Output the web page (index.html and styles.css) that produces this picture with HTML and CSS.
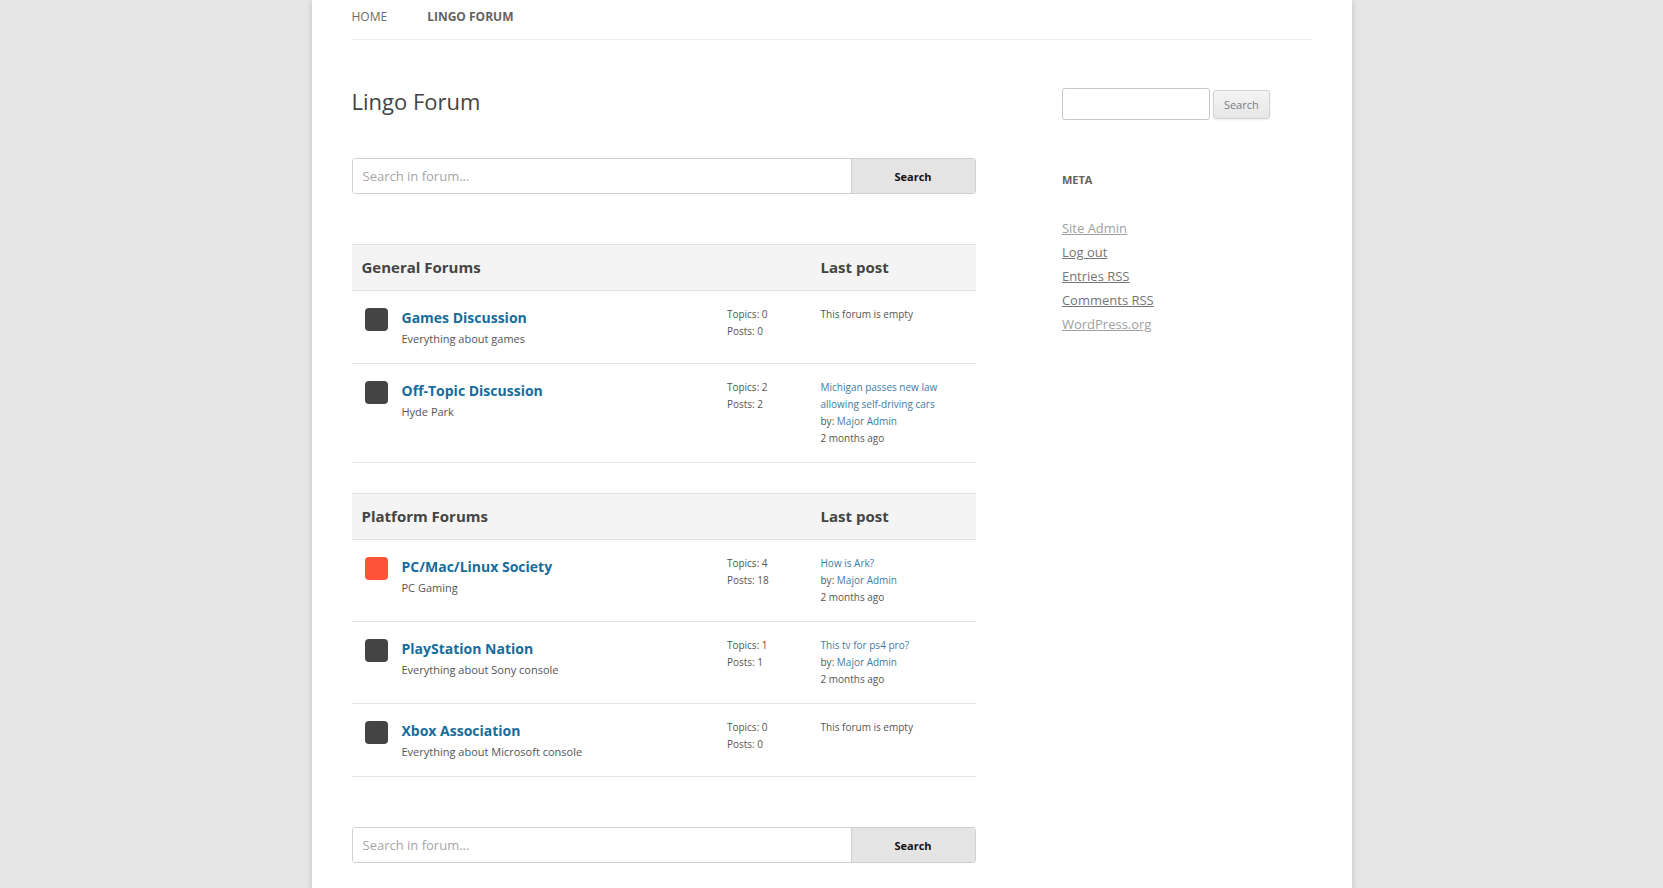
FILE: index.html
```html
<!DOCTYPE html>
<html lang="en">
<head>
<meta charset="utf-8">
<title>Lingo Forum</title>
<link rel="stylesheet" href="styles.css">
</head>
<body>
<div class="page">
  <nav class="main-nav">
    <a href="#">Home</a>
    <a href="#" class="current" aria-current="page">Lingo Forum</a>
  </nav>
  <div class="columns">
    <main class="content">
      <h1 class="title">Lingo Forum</h1>
      <form class="forum-search">
        <input type="text" placeholder="Search in forum..." aria-label="Search in forum">
        <button type="button">Search</button>
      </form>

      <table class="forums">
        <colgroup><col class="col-icon"><col><col class="col-counts"><col class="col-last"></colgroup>
        <thead>
          <tr><th colspan="3" class="group">General Forums</th><th>Last post</th></tr>
        </thead>
        <tbody>
          <tr>
            <td><span class="marker"></span></td>
            <td><a class="name" href="#">Games Discussion</a><p class="about">Everything about games</p></td>
            <td class="small">Topics: 0<br>Posts: 0</td>
            <td class="small">This forum is empty</td>
          </tr>
          <tr>
            <td><span class="marker"></span></td>
            <td><a class="name" href="#">Off-Topic Discussion</a><p class="about">Hyde Park</p></td>
            <td class="small">Topics: 2<br>Posts: 2</td>
            <td class="small"><a href="#">Michigan passes new law allowing self-driving cars</a><br>by: <a href="#">Major Admin</a><br>2 months ago</td>
          </tr>
        </tbody>
      </table>

      <table class="forums">
        <colgroup><col class="col-icon"><col><col class="col-counts"><col class="col-last"></colgroup>
        <thead>
          <tr><th colspan="3" class="group">Platform Forums</th><th>Last post</th></tr>
        </thead>
        <tbody>
          <tr>
            <td><span class="marker unread"></span></td>
            <td><a class="name" href="#">PC/Mac/Linux Society</a><p class="about">PC Gaming</p></td>
            <td class="small">Topics: 4<br>Posts: 18</td>
            <td class="small"><a href="#">How is Ark?</a><br>by: <a href="#">Major Admin</a><br>2 months ago</td>
          </tr>
          <tr>
            <td><span class="marker"></span></td>
            <td><a class="name" href="#">PlayStation Nation</a><p class="about">Everything about Sony console</p></td>
            <td class="small">Topics: 1<br>Posts: 1</td>
            <td class="small"><a href="#">This tv for ps4 pro?</a><br>by: <a href="#">Major Admin</a><br>2 months ago</td>
          </tr>
          <tr>
            <td><span class="marker"></span></td>
            <td><a class="name" href="#">Xbox Association</a><p class="about">Everything about Microsoft console</p></td>
            <td class="small">Topics: 0<br>Posts: 0</td>
            <td class="small">This forum is empty</td>
          </tr>
        </tbody>
      </table>

      <form class="forum-search">
        <input type="text" placeholder="Search in forum..." aria-label="Search in forum">
        <button type="button">Search</button>
      </form>
    </main>

    <aside class="sidebar">
      <form class="site-search">
        <input type="text" aria-label="Search site">
        <button type="button">Search</button>
      </form>
      <h2 class="widget-title">Meta</h2>
      <ul class="links">
        <li><a href="#" class="visited">Site Admin</a></li>
        <li><a href="#">Log out</a></li>
        <li><a href="#">Entries RSS</a></li>
        <li><a href="#">Comments RSS</a></li>
        <li><a href="#" class="visited">WordPress.org</a></li>
      </ul>
    </aside>
  </div>
</div>
</body>
</html>
```
FILE: styles.css
```css
* {
  box-sizing: border-box;
}

body {
  margin: 0;
  background: #e6e6e6;
  color: #444;
  font-family: "Open Sans", "Noto Sans", sans-serif;
  font-size: 14px;
}

h1, h2, p, ul {
  margin: 0;
  padding: 0;
}

input, button {
  font-family: inherit;
}

.page {
  max-width: 1040px;
  min-height: 100vh;
  margin: 0 auto;
  padding: 0 40px;
  background: #fff;
  box-shadow: 0 2px 6px rgba(100, 100, 100, 0.3);
}

.main-nav {
  display: flex;
  gap: 40px;
  padding-bottom: 5px;
  border-bottom: 1px solid #ededed;
  font-size: 12px;
  line-height: 34px;
  text-transform: uppercase;
}

.main-nav a {
  color: #6a6a6a;
  text-decoration: none;
}

.main-nav .current {
  color: #636363;
  font-weight: 700;
}

.columns {
  display: flex;
  justify-content: space-between;
  padding: 48px 0 25px;
}

.content {
  width: 65%;
}

.sidebar {
  width: 26%;
}

.title {
  margin-bottom: 44px;
  font-size: 22px;
  font-weight: 400;
  line-height: 26px;
}

.forum-search {
  display: flex;
  height: 36px;
  margin-bottom: 50px;
  border: 1px solid #d0d0d0;
  border-radius: 3px;
  overflow: hidden;
}

.forum-search input {
  flex: 1;
  min-width: 0;
  padding: 0 10px;
  border: 0;
  background: #fff;
  font-size: 13px;
}

.forum-search input::placeholder {
  color: #a6a6a6;
}

.forum-search button {
  width: 124px;
  border: 0;
  border-left: 1px solid #d0d0d0;
  background: #e4e4e4;
  color: #111;
  font-size: 11px;
  font-weight: 700;
}

.forums {
  width: 100%;
  margin-bottom: 30px;
  border-spacing: 0;
  table-layout: fixed;
}

.forums + .forum-search {
  margin-top: 50px;
  margin-bottom: 0;
}

.col-icon {
  width: 50px;
}

.col-counts {
  width: 15%;
}

.col-last {
  width: 25%;
}

.forums th {
  padding: 10px 0 10px 1px;
  border: solid #e3e3e3;
  border-width: 1px 0;
  background: #f4f4f4;
  font-size: 15px;
  font-weight: 700;
  line-height: 25px;
  text-align: left;
}

.forums th.group {
  padding-left: 10px;
}

.forums td {
  padding: 15px 0;
  border-bottom: 1px solid #e3e3e3;
  vertical-align: top;
}

.marker {
  display: block;
  width: 23px;
  height: 23px;
  margin: 2px 0 0 13px;
  border-radius: 4px;
  background: #444;
}

.marker.unread {
  background: #ff5339;
}

.name {
  display: block;
  color: #176c9c;
  font-weight: 700;
  line-height: 24px;
  text-decoration: none;
}

.about {
  color: #555;
  font-size: 11px;
  line-height: 18px;
}

.forums td.small {
  padding-right: 20px;
  padding-left: 1px;
  color: #555;
  font-size: 10px;
  line-height: 17px;
}

.small a {
  color: #427ba5;
  text-decoration: none;
}

.site-search {
  display: flex;
  align-items: center;
  gap: 3px;
  margin-bottom: 48px;
}

.site-search input {
  width: 148px;
  height: 32px;
  padding: 6px;
  border: 1px solid #c8c8c8;
  border-radius: 3px;
}

.site-search button {
  height: 29px;
  padding: 0 10px;
  border: 1px solid #d2d2d2;
  border-radius: 3px;
  background: linear-gradient(#f4f4f4, #e6e6e6);
  box-shadow: 0 1px 2px rgba(64, 64, 64, 0.1);
  color: #7c7c7c;
  font-size: 11px;
}

.widget-title {
  margin-bottom: 24px;
  color: #636363;
  font-size: 11px;
  line-height: 24px;
  text-transform: uppercase;
}

.links {
  list-style: none;
  font-size: 13px;
  line-height: 24px;
}

.links a {
  color: #757575;
}

.links .visited {
  color: #9f9f9f;
}
```
